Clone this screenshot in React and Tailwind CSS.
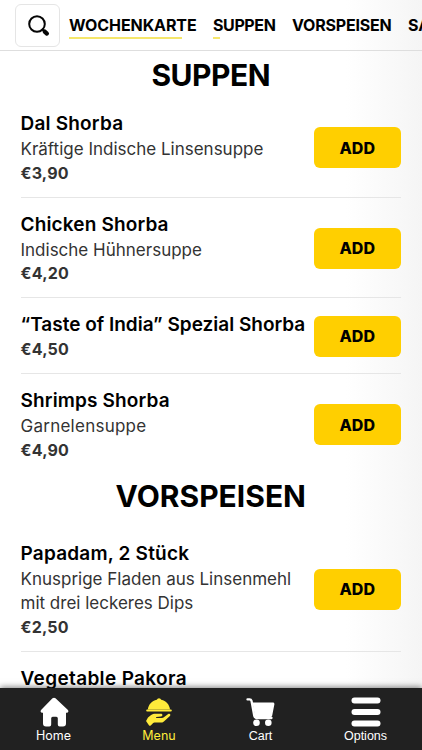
import React from 'react';

const categories = [
  { name: 'WOCHENKARTE', text: 'tracking-[-0.1px]', width: 'w-[127px]', bar: 'w-[113px]' },
  { name: 'SUPPEN', text: 'tracking-[-0.4px]', width: 'w-[62px]', bar: 'w-[7px]' },
  { name: 'VORSPEISEN', text: 'tracking-[-0.2px]', width: 'w-[99px]', bar: 'w-0' },
  { name: 'SALATE', text: 'tracking-normal', width: 'w-[60px]', bar: 'w-0' },
];

const sections = [
  {
    title: 'SUPPEN',
    heading: 'h-[46px] pt-[2px] tracking-[-0.5px]',
    items: [
      { name: 'Dal Shorba', tracking: 'tracking-[0.2px]', lines: ['Kräftige Indische Linsensuppe'], price: '€3,90' },
      { name: 'Chicken Shorba', tracking: 'tracking-[0.15px]', lines: ['Indische Hühnersuppe'], price: '€4,20' },
      { name: '“Taste of India” Spezial Shorba', tracking: 'tracking-normal', lines: [], price: '€4,50' },
      { name: 'Shrimps Shorba', tracking: 'tracking-[0.15px]', lines: ['Garnelensuppe'], lineTracking: 'tracking-[0.25px]', price: '€4,90' },
    ],
  },
  {
    title: 'VORSPEISEN',
    heading: 'h-[52px] pb-[9px] tracking-normal',
    items: [
      { name: 'Papadam, 2 Stück', tracking: 'tracking-[0.2px]', lines: ['Knusprige Fladen aus Linsenmehl', 'mit drei leckeres Dips'], price: '€2,50' },
      { name: 'Vegetable Pakora', tracking: 'tracking-[0.35px]', lines: [] },
    ],
  },
];

function SearchIcon() {
  return (
    <svg width="22" height="22" viewBox="0 0 22 22" fill="none" stroke="#050505" strokeLinecap="round">
      <circle cx="9" cy="9" r="7.8" strokeWidth="2" />
      <path d="M14.5 14.5l2 2" strokeWidth="2" />
      <path d="M16.7 16.6l2.2 2" strokeWidth="4.2" />
    </svg>
  );
}

function HomeIcon() {
  return (
    <svg width="30" height="30" viewBox="0 0 30 30" fill="currentColor">
      <path d="M13.500 1.300a2.300 2.300 0 0 1 3 0l12.200 11.400c1.300 1.300.7 3-.9 3H27v10.700a3 3 0 0 1-3 3h-3.300a1.900 1.900 0 0 1-1.900-1.900v-6.300a1.500 1.500 0 0 0-1.500-1.500h-3.600a1.500 1.500 0 0 0-1.500 1.500v6.300a1.900 1.900 0 0 1-1.900 1.900H7a3 3 0 0 1-3-3V15.700h-.8c-1.600 0-2.200-1.700-.9-3z" />
    </svg>
  );
}

function MenuIcon() {
  return (
    <svg width="28" height="30" viewBox="0 0 28 30" fill="currentColor">
      <path d="M11.800 2.800a2.300 2.300 0 0 1 4.400 0c4.900 1 8.400 5 8.800 9.800H2.900c.4-4.800 4-8.800 8.900-9.800z" />
      <rect x="1.200" y="12.400" width="25.600" height="2" rx="1" />
      <path d="M3 20.500l3.100-2.500c1.200-.9 2.700-1.200 4.200-1.200h5.700c1.900 0 1.900 2.500 0 2.800l-4.500.3c-.8.100-.7 1 0 1h5.200c1 0 1.700-.3 2.500-.9l4-2.900c1.500-1 3 .5 1.700 1.900l-6 5.400c-1 .9-2 1.200-3.300 1.200H10.300c-1.200 0-2 .3-2.800 1.100l-1.800 1.700c-.5.5-1.200.5-1.600 0L1.500 24.700c-.5-.6-.4-1.100.1-1.600z" />
    </svg>
  );
}

function CartIcon() {
  return (
    <svg width="30" height="30" viewBox="0 0 30 30" fill="currentColor">
      <path d="M1.500 2.400h2.100c1 0 1.600.4 1.900 1.400L8.300 19a2.500 2.500 0 0 0 2.500 2h14.700" fill="none" stroke="currentColor" strokeWidth="2.300" strokeLinecap="round" />
      <path d="M6.500 5.500h20.400c1 0 1.700.8 1.500 1.800L26.200 18.500c-.2 1.100-1.100 1.900-2.200 1.900H9.200z" />
      <circle cx="10.500" cy="25.800" r="3.300" />
      <circle cx="22.300" cy="25.800" r="3.300" />
    </svg>
  );
}

function OptionsIcon() {
  return (
    <svg width="30" height="30" viewBox="0 0 30 30" fill="currentColor">
      <rect x="0.500" y="0.500" width="29" height="6" rx="3" />
      <rect x="0.500" y="12" width="29" height="6" rx="3" />
      <rect x="0.500" y="23.500" width="29" height="6" rx="3" />
    </svg>
  );
}

function MenuItem({ item }) {
  return (
    <div className="flex items-center justify-between border-b border-[#e6e6e6] pt-[13px] pb-[11.5px] last:border-transparent">
      <div className="whitespace-nowrap">
        <h3 className={`${item.tracking} text-[19px] leading-[27px] font-semibold text-black`}>{item.name}</h3>
        {item.lines.map(line => (
          <p key={line} className={`${item.lineTracking || 'tracking-normal'} text-[17px] leading-[24.5px] text-[#333]`}>{line}</p>
        ))}
        {item.price && <p className="text-[16px] leading-[23.5px] font-bold tracking-[0.2px] text-[#333]">{item.price}</p>}
      </div>
      {item.price && (
        <button className="h-[41px] w-[87.5px] shrink-0 rounded-md bg-[#ffcf00] text-[16px] font-extrabold text-black">ADD</button>
      )}
    </div>
  );
}

const tabs = [
  { label: 'Home', icon: HomeIcon, color: 'text-white', font: "font-['Inter',sans-serif]" },
  { label: 'Menu', icon: MenuIcon, color: 'text-[#ffeb3b]', font: "font-['Inter',sans-serif]" },
  { label: 'Cart', icon: CartIcon, color: 'text-white', font: "font-['Liberation_Sans',sans-serif]" },
  { label: 'Options', icon: OptionsIcon, color: 'text-white', font: "font-['Liberation_Sans',sans-serif]" },
];

export default function App() {
  return (
    <div className="flex h-[750px] w-[422px] flex-col overflow-hidden bg-white bg-linear-to-r from-white from-82% to-[#f5f5f5] font-['Inter',sans-serif]">
      <header className="flex h-[51px] shrink-0 items-center overflow-hidden border-b border-[#dedede] pl-[15px]">
        <button className="mr-[9px] flex h-[43px] w-[45px] shrink-0 items-center justify-center rounded-md border border-[#e5e5e5] pt-[2px] pl-[3px]">
          <SearchIcon />
        </button>
        <nav className="flex gap-[17px]">
          {categories.map(cat => (
            <div key={cat.name} className={`${cat.width} shrink-0 pt-[2px] whitespace-nowrap`}>
              <div className={`${cat.text} text-[16px] leading-[24px] font-bold text-black`}>{cat.name}</div>
              <div className={`${cat.bar} h-[2px] bg-[#f5e66b]`} />
            </div>
          ))}
        </nav>
      </header>

      <main className="min-h-0 flex-1 overflow-hidden pr-[21px] pl-[20.5px]">
        {sections.map(section => (
          <section key={section.title}>
            <h2 className={`${section.heading} flex items-center justify-center text-[30px] leading-none font-bold text-black`}>{section.title}</h2>
            {section.items.map(item => <MenuItem key={item.name} item={item} />)}
          </section>
        ))}
      </main>

      <footer className="relative grid h-[62px] shrink-0 grid-cols-[107px_104px_99px_111px] bg-[#212121] shadow-[0_-1px_6px_rgba(0,0,0,0.5)]">
        {tabs.map(({ label, icon: Icon, color, font }) => (
          <div key={label} className={`${color} flex flex-col items-center pt-[9px]`}>
            <Icon />
            <span className={`${font} text-[12.5px] leading-[18px]`}>{label}</span>
          </div>
        ))}
      </footer>
    </div>
  );
}
